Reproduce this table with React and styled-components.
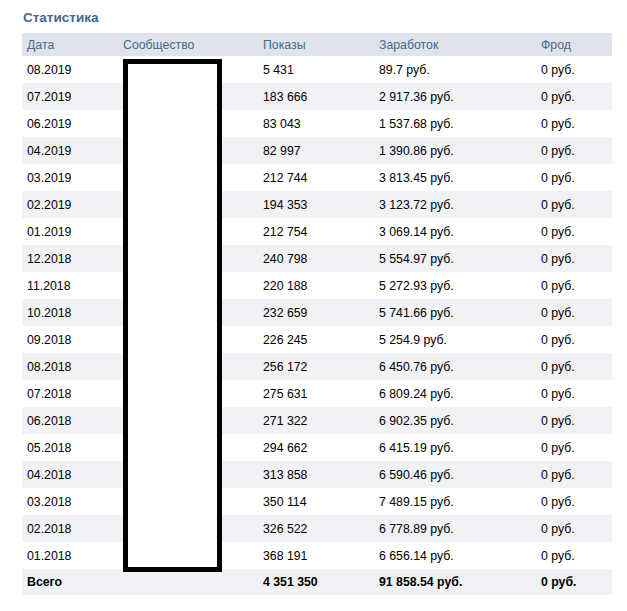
import React from 'react'
import styled, { createGlobalStyle } from 'styled-components'

const GlobalStyle = createGlobalStyle`
body {
  margin: 0;
  background: #fff;
  font-family: "Liberation Sans", Arial, sans-serif;
}
`

const Page = styled.div`
padding: 9px 15px 0 22px;
width: 590px;
`
const Title = styled.h2`
margin: 0 0 7px 1px;
font-size: 13.5px;
font-weight: bold;
color: #45688e;
line-height: 17px;
`
const TableWrap = styled.div`
position: relative;
`
const Table = styled.table`
width: 590px;
border-collapse: collapse;
table-layout: fixed;
font-size: 12.3px;
`
const Th = styled.th`
height: 23px;
padding: 0 0 0 5px;
text-align: left;
font-weight: normal;
color: #45688e;
background: #dfe4eb;
`
const Row = styled.tr`
background: ${p => (p.$shade ? '#f0f2f5' : '#fff')};
`
const Td = styled.td`
height: ${p => (p.$total ? '26px' : '27px')};
padding: 0 0 0 5px;
color: #000;
font-weight: ${p => (p.$total ? 'bold' : 'normal')};
white-space: nowrap;
`
const Redaction = styled.div`
position: absolute;
left: 101px;
top: 26px;
width: 89px;
height: 503px;
border: 5px solid #000;
background: #fff;
`

const data = [
  ['08.2019', '5 431', '89.7 руб.'],
  ['07.2019', '183 666', '2 917.36 руб.'],
  ['06.2019', '83 043', '1 537.68 руб.'],
  ['04.2019', '82 997', '1 390.86 руб.'],
  ['03.2019', '212 744', '3 813.45 руб.'],
  ['02.2019', '194 353', '3 123.72 руб.'],
  ['01.2019', '212 754', '3 069.14 руб.'],
  ['12.2018', '240 798', '5 554.97 руб.'],
  ['11.2018', '220 188', '5 272.93 руб.'],
  ['10.2018', '232 659', '5 741.66 руб.'],
  ['09.2018', '226 245', '5 254.9 руб.'],
  ['08.2018', '256 172', '6 450.76 руб.'],
  ['07.2018', '275 631', '6 809.24 руб.'],
  ['06.2018', '271 322', '6 902.35 руб.'],
  ['05.2018', '294 662', '6 415.19 руб.'],
  ['04.2018', '313 858', '6 590.46 руб.'],
  ['03.2018', '350 114', '7 489.15 руб.'],
  ['02.2018', '326 522', '6 778.89 руб.'],
  ['01.2018', '368 191', '6 656.14 руб.'],
]

const App = () => {
  return (
    <Page>
      <GlobalStyle />
      <Title>Статистика</Title>
      <TableWrap>
        <Table>
          <colgroup>
            <col style={{ width: 96 }} />
            <col style={{ width: 140 }} />
            <col style={{ width: 116 }} />
            <col style={{ width: 162 }} />
            <col style={{ width: 76 }} />
          </colgroup>
          <thead>
            <tr>
              <Th>Дата</Th>
              <Th>Сообщество</Th>
              <Th>Показы</Th>
              <Th>Заработок</Th>
              <Th>Фрод</Th>
            </tr>
          </thead>
          <tbody>
            {data.map((r, i) => (
              <Row key={r[0]} $shade={i % 2 === 1}>
                <Td>{r[0]}</Td>
                <Td />
                <Td>{r[1]}</Td>
                <Td>{r[2]}</Td>
                <Td>0 руб.</Td>
              </Row>
            ))}
            <Row $shade>
              <Td $total>Всего</Td>
              <Td $total />
              <Td $total>4 351 350</Td>
              <Td $total>91 858.54 руб.</Td>
              <Td $total>0 руб.</Td>
            </Row>
          </tbody>
        </Table>
        <Redaction />
      </TableWrap>
    </Page>
  )
}

export default App
